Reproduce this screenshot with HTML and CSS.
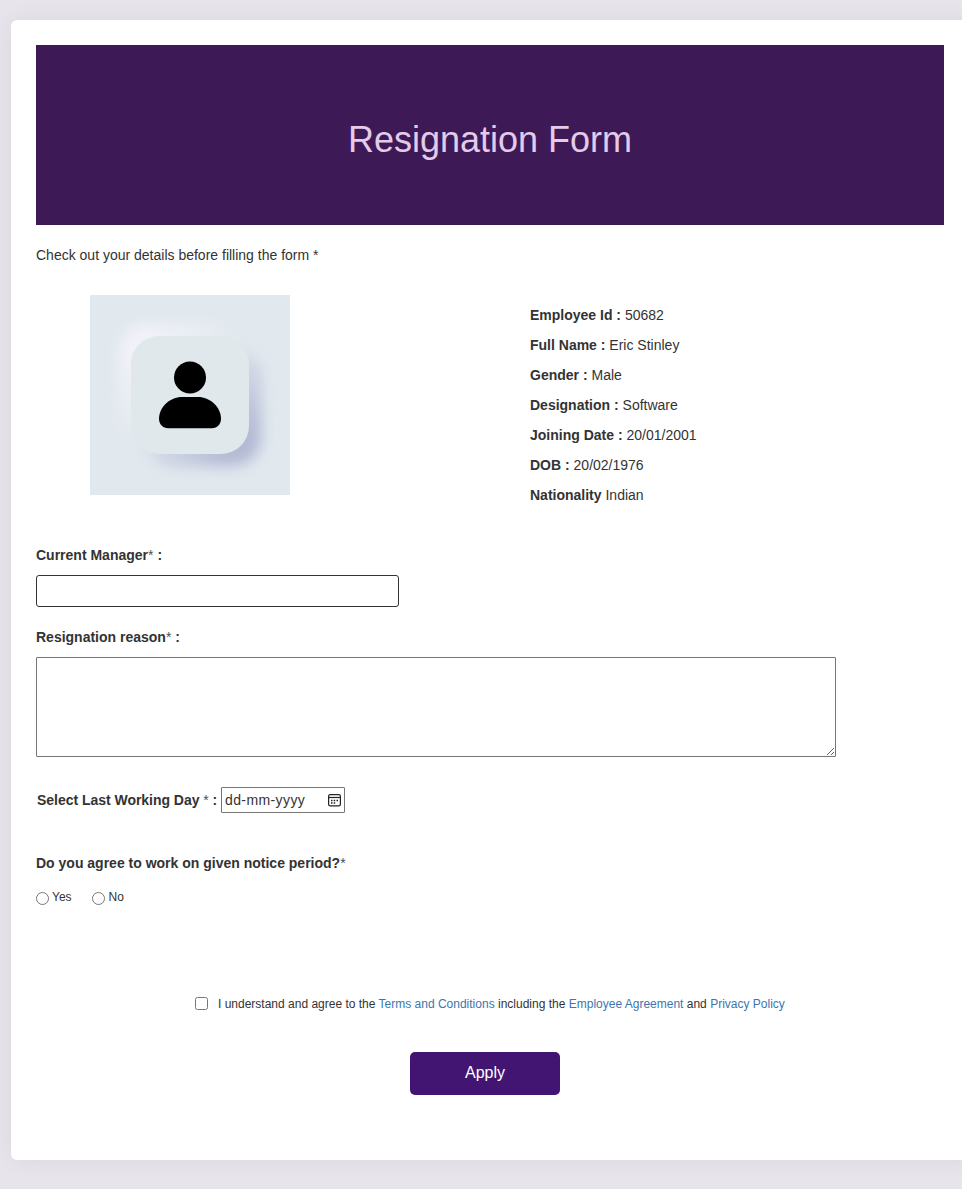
FILE: index.html
```html
<!DOCTYPE html>
<html lang="en">
<head>
<meta charset="utf-8">
<title>Resignation Form</title>
<link rel="stylesheet" href="styles.css">
</head>
<body>
<main class="card">
  <header class="banner"><h1>Resignation Form</h1></header>
  <p class="intro">Check out your details before filling the form *</p>
  <section class="profile">
    <svg class="avatar" viewBox="0 0 200 200" width="200" height="200">
      <defs>
        <filter id="soft" x="-30%" y="-30%" width="160%" height="160%"><feGaussianBlur stdDeviation="7"/></filter>
        <linearGradient id="light" x1="0" y1="0" x2="1" y2="1"><stop offset="0.15" stop-color="#f2f2fa"/><stop offset="0.65" stop-color="#eeeff7" stop-opacity="0"/></linearGradient>
        <linearGradient id="shade" x1="0" y1="0" x2="1" y2="1"><stop offset="0.35" stop-color="#b9c0d8" stop-opacity="0"/><stop offset="0.8" stop-color="#b3bad4"/></linearGradient>
      </defs>
      <rect width="200" height="200" fill="#e1e8ee"/>
      <rect x="29" y="29" width="118" height="118" rx="28" fill="url(#light)" filter="url(#soft)"/>
      <rect x="53" y="53" width="118" height="118" rx="28" fill="url(#shade)" filter="url(#soft)"/>
      <rect x="41" y="41" width="118" height="118" rx="28" fill="#e1e8ec"/>
      <circle cx="100" cy="82.500" r="16"/>
      <path d="M69 124C69 112 80 102 92 102H108C120 102 131 112 131 124C131 129 127 133.300 122 133.300H78C73 133.300 69 129 69 124Z"/>
    </svg>
    <div class="details">
      <p><b>Employee Id :</b> 50682</p>
      <p><b>Full Name :</b> Eric Stinley</p>
      <p><b>Gender :</b> Male</p>
      <p><b>Designation :</b> Software</p>
      <p><b>Joining Date :</b> 20/01/2001</p>
      <p><b>DOB :</b> 20/02/1976</p>
      <p><b>Nationality</b> Indian</p>
    </div>
  </section>
  <form class="form">
    <label class="label" for="manager"><b>Current Manager</b><span class="star">*</span> <b>:</b></label>
    <input class="manager" id="manager" type="text">
    <label class="label reason-label" for="reason"><b>Resignation reason</b><span class="star">*</span> <b>:</b></label>
    <textarea class="reason" id="reason"></textarea>
    <div class="date-row">
      <span class="date-label"><b>Select Last Working Day</b> <span class="star">*</span> <b>:</b></span>
      <div class="date"><span class="date-text">dd-mm-yyyy</span>
        <svg width="14" height="14" viewBox="0 0 14 14" fill="none" stroke="#222"><rect x="1.600" y="1.600" width="11.800" height="11.300" rx="1.700" stroke-width="1.200"/><path d="M1.500 4.500H13.500" stroke-width="1.200"/><path d="M6.700 7.500H8.200M9.500 7.500H11M4 10H5.500M6.700 10H8.200M4 7.500H5.500" stroke-width="1.500"/></svg>
      </div>
    </div>
    <p class="notice"><b>Do you agree to work on given notice period?</b><span class="star">*</span></p>
    <div class="radios">
      <label><input type="radio" name="notice"><span>Yes</span></label>
      <label class="no"><input type="radio" name="notice"><span>No</span></label>
    </div>
    <div class="agree">
      <input type="checkbox">
      <span>I understand and agree to the <a>Terms and Conditions</a> including the <a>Employee Agreement</a> and <a>Privacy Policy</a></span>
    </div>
    <button class="apply" type="button">Apply</button>
  </form>
</main>
</body>
</html>
```
FILE: styles.css
```css
* { box-sizing: border-box; }
body {
  margin: 0;
  padding-top: 20px;
  height: 1189px;
  overflow: hidden;
  background: #e8e4eb;
  color: #333;
  font: 14px/20px "Liberation Sans", Arial, sans-serif;
}
p, h1 { margin: 0; }
.card {
  width: 970px;
  height: 1140px;
  margin-left: 11px;
  padding: 25px;
  border-radius: 6px;
  background: #fff;
  box-shadow: 0 0 25px rgba(0, 0, 0, 0.06);
}
.banner {
  display: flex;
  align-items: center;
  justify-content: center;
  width: 908px;
  height: 180px;
  padding-top: 9px;
  background: #3d1a56;
}
.banner h1 { color: #e3cbe9; font-size: 36px; line-height: 40px; font-weight: 400; }
.intro { margin-top: 20px; }
.profile { display: flex; margin-top: 30px; padding-left: 54px; }
.avatar { display: block; }
.details { margin: 10px 0 0 240px; }
.details p { margin-bottom: 10px; }
.form { display: flex; flex-direction: column; align-items: flex-start; margin-top: 30px; }
.star { color: #505050; }
.manager {
  width: 363px;
  height: 32px;
  margin-top: 10px;
  border: 1px solid #333;
  border-radius: 3px;
}
.reason-label { margin-top: 20px; }
.reason {
  width: 800px;
  height: 100px;
  margin-top: 10px;
  border: 1px solid #767676;
  border-radius: 1px;
}
.date-row { display: flex; align-items: center; gap: 4px; margin-top: 30px; padding-left: 1px; }
.date-label { width: 180px; letter-spacing: -0.03px; white-space: nowrap; }
.date {
  display: flex;
  align-items: center;
  justify-content: space-between;
  width: 124px;
  height: 26px;
  padding: 0 3px;
  border: 1px solid #767676;
  border-radius: 1px;
}
.date-text { letter-spacing: 0.4px; }
.notice { margin-top: 40px; }
.radios { display: flex; gap: 20px; margin-top: 14px; font-size: 12px; }
.radios label { display: flex; align-items: flex-start; gap: 3px; }
.radios .no { gap: 4px; }
.radios input { width: 13px; height: 13px; margin: 5px 0 0; }
.agree { display: flex; align-items: flex-start; gap: 10px; margin: 87px 0 0 159px; font-size: 12px; white-space: nowrap; }
.agree input { width: 13px; height: 13px; margin: 3px 0 0; }
.agree a { color: #3d76ad; }
.apply {
  width: 150px;
  height: 43px;
  margin: 38px 0 0 374px;
  padding: 0 0 2px;
  border: 0;
  border-radius: 5px;
  background: #431572;
  color: #fff;
  font: 16px "Liberation Sans", Arial, sans-serif;
}
```
